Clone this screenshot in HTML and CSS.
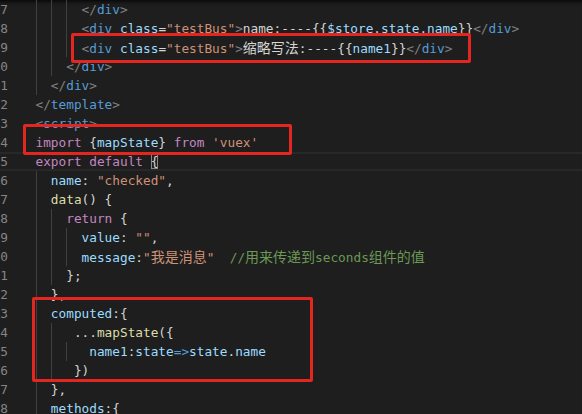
FILE: index.html
```html
<!DOCTYPE html>
<html lang="zh">
<head>
    <meta charset="UTF-8">
    <meta name="viewport" content="width=device-width, initial-scale=1.0">
    <title>checked.vue</title>
    <link rel="stylesheet" href="styles.css">
</head>
<body>
    <div class="editor">
        <div class="row"><span class="ln">17</span><span class="src"><span class="ind"></span><span class="ind"></span><span class="ind"></span><span class="p">&lt;/</span><span class="tag">div</span><span class="p">&gt;</span></span></div>
        <div class="row"><span class="ln">18</span><span class="src"><span class="ind"></span><span class="ind"></span><span class="ind"></span><span class="p">&lt;</span><span class="tag">div</span> <span class="attr">class</span>=<span class="str">"testBus"</span><span class="p">&gt;</span>name:----{{<span class="var">$store.state.name</span>}}<span class="p">&lt;/</span><span class="tag">div</span><span class="p">&gt;</span></span></div>
        <div class="row"><span class="ln">19</span><span class="src"><span class="ind"></span><span class="ind"></span><span class="ind"></span><span class="p">&lt;</span><span class="tag">div</span> <span class="attr">class</span>=<span class="str">"testBus"</span><span class="p">&gt;</span><span class="cjk">缩略写法</span>:----{{<span class="var">name1</span>}}<span class="p">&lt;/</span><span class="tag">div</span><span class="p">&gt;</span></span></div>
        <div class="row"><span class="ln">20</span><span class="src"><span class="ind"></span><span class="ind"></span><span class="p">&lt;/</span><span class="tag">div</span><span class="p">&gt;</span></span></div>
        <div class="row"><span class="ln">21</span><span class="src"><span class="ind"></span><span class="p">&lt;/</span><span class="tag">div</span><span class="p">&gt;</span></span></div>
        <div class="row"><span class="ln">22</span><span class="src"><span class="p">&lt;/</span><span class="tag">template</span><span class="p">&gt;</span></span></div>
        <div class="row"><span class="ln">23</span><span class="src"><span class="p">&lt;</span><span class="tag">script</span><span class="p">&gt;</span></span></div>
        <div class="row"><span class="ln">24</span><span class="src"><span class="kw">import</span> {<span class="var">mapState</span>} <span class="kw">from</span> <span class="str">'vuex'</span></span></div>
        <div class="row current"><span class="ln">25</span><span class="src"><span class="kw">export</span> <span class="kw">default</span> <span class="match">{</span></span></div>
        <div class="row"><span class="ln">26</span><span class="src"><span class="ind"></span><span class="var">name</span>: <span class="str">"checked"</span>,</span></div>
        <div class="row"><span class="ln">27</span><span class="src"><span class="ind"></span><span class="fn">data</span>() {</span></div>
        <div class="row"><span class="ln">28</span><span class="src"><span class="ind"></span><span class="ind"></span><span class="kw">return</span> {</span></div>
        <div class="row"><span class="ln">29</span><span class="src"><span class="ind"></span><span class="ind"></span><span class="ind"></span><span class="var">value</span>: <span class="str">""</span>,</span></div>
        <div class="row"><span class="ln">30</span><span class="src"><span class="ind"></span><span class="ind"></span><span class="ind"></span><span class="var">message</span>:<span class="str">"<span class="cjk">我是消息</span>"</span>  <span class="cm">//<span class="cjk">用来传递到</span>seconds<span class="cjk">组件的值</span></span></span></div>
        <div class="row"><span class="ln">31</span><span class="src"><span class="ind"></span><span class="ind"></span>};</span></div>
        <div class="row"><span class="ln">32</span><span class="src"><span class="ind"></span>},</span></div>
        <div class="row"><span class="ln">33</span><span class="src"><span class="ind"></span><span class="var">computed</span>:{</span></div>
        <div class="row"><span class="ln">34</span><span class="src"><span class="ind"></span><span class="ind"></span> ...<span class="fn">mapState</span>({</span></div>
        <div class="row"><span class="ln">35</span><span class="src"><span class="ind"></span><span class="ind"></span><span class="ind"></span> <span class="var">name1</span>:<span class="var">state</span><span class="op">=&gt;</span><span class="var">state</span>.<span class="var">name</span></span></div>
        <div class="row"><span class="ln">36</span><span class="src"><span class="ind"></span><span class="ind"></span> })</span></div>
        <div class="row"><span class="ln">37</span><span class="src"><span class="ind"></span>},</span></div>
        <div class="row"><span class="ln">38</span><span class="src"><span class="ind"></span><span class="var">methods</span>:{</span></div>

        <div class="mark mark-template"></div>
        <div class="mark mark-import"></div>
        <div class="mark mark-computed"></div>
    </div>
</body>
</html>
```

FILE: styles.css
```css
body {
    margin: 0;
    padding: 0;
    background-color: #1e1e1e;
    overflow: hidden;
}
.editor {
    position: relative;
    margin-left: -8px;
    height: 414px;
    font-family: "DejaVu Sans Mono", "Noto Sans CJK SC", monospace;
    font-size: 12.75px;
    line-height: 19px;
    color: #d4d4d4;
    box-shadow: inset 0 6px 5px -5px #000;
}
.row {
    display: grid;
    grid-template-columns: 16px 1fr;
    column-gap: 27.5px;
    height: 19px;
    white-space: pre;
}
.row.current {
    box-shadow: inset 0 2px #282828, inset 0 -2px #282828;
}
.ln {
    text-align: right;
    color: #858585;
}
.ind {
    display: inline-block;
    width: 15.36px;
    height: 19px;
    vertical-align: top;
    box-shadow: inset 1px 0 #404040;
}
.cjk {
    font-family: "Noto Sans CJK SC", sans-serif;
    font-size: 14px;
}
.p { color: #808080; }
.tag { color: #569cd6; }
.attr { color: #9cdcfe; }
.str { color: #ce9178; }
.kw { color: #c586c0; }
.var { color: #9cdcfe; }
.fn { color: #dcdcaa; }
.op { color: #569cd6; }
.cm { color: #6a9955; }
.match {
    box-shadow: inset 0 0 0 1px #888;
}
.mark {
    position: absolute;
    box-sizing: border-box;
    border: 3px solid #e3261f;
    border-radius: 2px;
}
.mark-template {
    left: 79px;
    top: 33px;
    width: 400px;
    height: 30px;
}
.mark-import {
    left: 30.5px;
    top: 124px;
    width: 269px;
    height: 31px;
}
.mark-computed {
    left: 40px;
    top: 297px;
    width: 281px;
    height: 85px;
}
```
